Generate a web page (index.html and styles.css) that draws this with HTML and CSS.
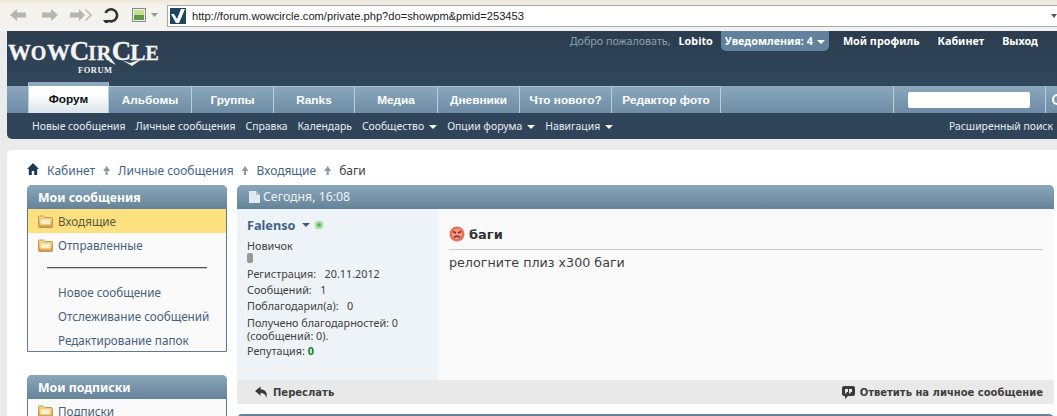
FILE: index.html
```html
<!DOCTYPE html>
<html lang="ru">
<head>
<meta charset="utf-8">
<title>WoWCircle Forum</title>
<link rel="stylesheet" href="styles.css">
</head>
<body>
<div class="browser">
  <div class="nav-icons">
    <svg class="ic i1" width="16" height="14" viewBox="0 0 16 14"><path d="M0 7l7-6v3.500h9v5H7V13z" fill="#b4b6b4"/></svg>
    <svg class="ic i2" width="16" height="14" viewBox="0 0 16 14"><path d="M16 7L9 1v3.500H0v5h9V13z" fill="#b4b6b4"/></svg>
    <svg class="ic i3" width="22" height="14" viewBox="0 0 22 14"><path d="M15 7L9 1v3.500H0v5h9V13zM22 7l-6-6-1 1 5 5-5 5 1 1z" fill="#b4b6b4"/></svg>
    <svg class="ic i4" width="16" height="16" viewBox="0 0 16 16"><path d="M2.500 6A6 6 0 1 1 5 13.500" fill="none" stroke="#333" stroke-width="2.600"/><path d="M0 10h7l-3.500-5z" fill="#333" transform="rotate(180 3.500 11.500)"/></svg>
    <svg class="ic pic" width="14" height="14" viewBox="0 0 14 14"><rect x=".5" y=".5" width="13" height="13" fill="#eee" stroke="#8a8a8a"/><rect x="2" y="2" width="10" height="5" fill="#c8e090"/><rect x="2" y="7" width="10" height="5" fill="#5f9a4a"/></svg>
    <svg class="ic" width="7" height="4" viewBox="0 0 7 4"><path d="M0 0h7L3.500 4z" fill="#999"/></svg>
  </div>
  <div class="url">
    <svg class="fav" width="16" height="16" viewBox="0 0 16 16"><rect width="16" height="16" fill="#1c4560"/><path d="M1 6h3l3 5 4-10h4L9 15H6z" fill="#fff"/></svg>
    <span class="url-text">http://forum.wowcircle.com/private.php?do=showpm&amp;pmid=253453</span>
    <span class="url-arrow"></span>
  </div>
</div>

<header class="header">
  <div class="top">
    <div class="logo">
      <div class="logo-main">W<span class="lg-s">O</span>W<span class="lg-b">C</span><span class="lg-s">IR</span><span class="lg-b">C</span>L<span class="lg-s">E</span></div>
      <div class="logo-sub">FORUM</div>
      <svg class="logo-tail" width="40" height="14" viewBox="0 0 40 14"><path d="M0 0l4 0 8 10-6-3zM18 5l8 3 12-4-10 7z" fill="#f1f1f1"/></svg>
    </div>
    <nav class="usernav">
      <span class="welcome">Добро пожаловать,</span>
      <a class="user">Lobito</a>
      <a class="notif">Уведомления: 4<span class="caret"></span></a>
      <a class="tlink">Мой профиль</a>
      <a class="tlink">Кабинет</a>
      <a class="tlink">Выход</a>
    </nav>
  </div>
  <div class="tabs">
    <a class="tab active">Форум</a>
    <a class="tab tab-83">Альбомы</a>
    <a class="tab tab-82">Группы</a>
    <a class="tab">Ranks</a>
    <a class="tab tab-83">Медиа</a>
    <a class="tab tab-82">Дневники</a>
    <a class="tab tab-w">Что нового?</a>
    <a class="tab tab-r">Редактор фото</a>
    <div class="search">
      <span class="search-input"></span>
    </div>
    <div class="search-btn"><span class="search-c"></span></div>
  </div>
  <div class="subnav">
    <a>Новые сообщения</a>
    <a>Личные сообщения</a>
    <a>Справка</a>
    <a>Календарь</a>
    <a>Сообщество<span class="caret"></span></a>
    <a>Опции форума<span class="caret"></span></a>
    <a>Навигация<span class="caret"></span></a>
    <a class="adv">Расширенный поиск</a>
  </div>
</header>

<main class="page">
  <div class="crumbs">
    <svg class="home" width="12" height="12" viewBox="0 0 12 12"><path d="M6 0L0 6h1.800v6h3V8h2.400v4h3V6H12z" fill="#1d3a54"/></svg>
    <a>Кабинет</a><span class="sep"></span>
    <a>Личные сообщения</a><span class="sep"></span>
    <a>Входящие</a><span class="sep"></span>
    <span class="cur">баги</span>
  </div>
  <div class="columns">
    <aside class="side">
      <section class="box">
        <h2 class="box-h">Мои сообщения</h2>
        <div class="box-b">
          <a class="folder sel"><svg class="fi" width="15" height="13" viewBox="0 0 15 13"><use href="#folder"/></svg>Входящие</a>
          <a class="folder"><svg class="fi" width="15" height="13" viewBox="0 0 15 13"><use href="#folder"/></svg>Отправленные</a>
          <hr class="rule">
          <a class="plain">Новое сообщение</a>
          <a class="plain">Отслеживание сообщений</a>
          <a class="plain">Редактирование папок</a>
        </div>
      </section>
      <section class="box box2">
        <h2 class="box-h">Мои подписки</h2>
        <div class="box-b">
          <a class="folder"><svg class="fi" width="15" height="13" viewBox="0 0 15 13"><use href="#folder"/></svg>Подписки</a>
        </div>
      </section>
    </aside>
    <div class="content">
      <article class="post">
        <div class="post-h">
          <svg class="doc" width="11" height="12" viewBox="0 0 11 12"><path d="M0 0h7l4 4v8H0z" fill="#dfe9f2"/><path d="M7 0l4 4H7z" fill="#a9bfd2"/></svg>
          Сегодня, 16:08
        </div>
        <div class="post-b">
          <div class="author">
            <div class="a-name"><a>Falenso</a><span class="caret dark"></span><span class="online"></span></div>
            <div class="a-rank">Новичок</div>
            <div class="a-pip"></div>
            <div class="a-row">Регистрация: &nbsp; 20.11.2012</div>
            <div class="a-row">Сообщений: &nbsp; 1</div>
            <div class="a-row">Поблагодарил(а): &nbsp; 0</div>
            <div class="a-row a-multi">Получено благодарностей: 0<br>(сообщений: 0).</div>
            <div class="a-row a-rep">Репутация: <b class="rep">0</b></div>
          </div>
          <div class="message">
            <h3 class="m-title">
              <svg class="angry" width="16" height="16" viewBox="0 0 16 16"><circle cx="8" cy="8" r="7.500" fill="#e8705c"/><circle cx="8" cy="8" r="5" fill="#f09a86"/><path d="M4 5.500l3 1.500M12 5.500L9 7M5 11.500q3-2.500 6 0" stroke="#8a2a1c" stroke-width="1.400" fill="none"/></svg>
              баги
            </h3>
            <p class="m-text">релогните плиз х300 баги</p>
          </div>
        </div>
        <div class="post-f">
          <a class="act"><svg class="fwd" width="14" height="13" viewBox="0 0 15 13"><path d="M6 0L0 5l6 5V7c3 0 5 1 6 5 2-5-1-9-6-9z" fill="#3a3a3a"/></svg>Переслать</a>
          <a class="act"><svg width="13" height="13" viewBox="0 0 13 13"><path d="M2 0h9a2 2 0 0 1 2 2v6a2 2 0 0 1-2 2H6l-3 3v-3H2a2 2 0 0 1-2-2V2a2 2 0 0 1 2-2z" fill="#3a3a3a"/><path d="M3 3h3v3H4.500v1.500H3zM7 3h3v3H8.500v1.500H7z" fill="#e9e9e9"/></svg>Ответить на личное сообщение</a>
        </div>
      </article>
      <div class="post-next"></div>
    </div>
  </div>
</main>

<svg class="defs" width="0" height="0" aria-hidden="true">
  <defs>
    <linearGradient id="fg" x1="0" y1="0" x2="0" y2="1"><stop offset="0" stop-color="#f6dd9b"/><stop offset="1" stop-color="#d39a42"/></linearGradient>
    <symbol id="folder" viewBox="0 0 15 13"><path d="M1.500 1h4l1.500 1.500h6.500a1 1 0 0 1 1 1v8a1 1 0 0 1-1 1h-12a1 1 0 0 1-1-1v-9.500a1 1 0 0 1 1-1z" fill="url(#fg)" stroke="#b98a3e" stroke-width=".8"/><rect x="2.500" y="4.500" width="10" height="5" fill="#fbefc4"/></symbol>
  </defs>
</svg>
</body>
</html>
```
FILE: styles.css
```css
* { box-sizing: border-box; }
html, body { margin: 0; padding: 0; height: 416px; overflow: hidden; }
body { background: #ebebeb; font-family: "Noto Sans", sans-serif; font-size: 11px; color: #3e3e3e; }
a { color: inherit; text-decoration: none; }
.defs { position: absolute; }

.browser { height: 31px; display: flex; align-items: center; background: linear-gradient(#ece9d8, #f4f3ee 20%, #f3f2ee); padding: 0 0 1px 10px; }
.nav-icons { display: flex; align-items: center; width: 157px; flex: none; }
.ic { flex: none; }
.i1 { margin-right: 16px; }
.i2 { margin-right: 12px; }
.i3 { margin-right: 11px; }
.i4 { margin-right: 13px; }
.ic.pic { margin-right: 5px; }
.url { flex: 1; height: 22px; margin-top: 1px; background: #fff; border: 1px solid #a7a6aa; border-right: 0; display: flex; align-items: center; padding-left: 2px; }
.fav { flex: none; margin-right: 6px; }
.url-text { font: 11.150px "Liberation Sans", sans-serif; color: #222; white-space: nowrap; }
.url-arrow { margin-left: auto; width: 0; height: 0; border: 3px solid transparent; border-top: 4px solid #555; border-bottom: 0; }

.header { margin-left: 7px; height: 108px; background: linear-gradient(#2b3c4e, #31465a 45%, #2f4459); border-bottom-left-radius: 5px; }
.top { height: 55px; display: flex; justify-content: space-between; }
.logo { position: relative; padding-left: 1px; padding-top: 8px; color: #f3f3f3; width: 170px; line-height: 1; }
.logo-main { font: bold 23px/24px "Liberation Serif", serif; letter-spacing: -.2px; white-space: nowrap; -webkit-text-stroke: .3px #f3f3f3; height: 24px; }
.lg-s { font-size: 20px; letter-spacing: .6px; }
.lg-b { font-size: 27px; letter-spacing: -1px; }
.logo-sub { font: bold 8.500px/10px "Liberation Serif", serif; padding-left: 70px; margin-top: 2px; letter-spacing: .5px; }
.logo-tail { position: absolute; left: 97px; top: 24px; }
.usernav { display: flex; align-items: flex-start; padding-right: 19px; font: bold 10.800px "Noto Sans", sans-serif; color: #fff; height: 20px; }
.usernav > * { line-height: 20px; white-space: nowrap; }
.welcome { font-weight: normal; color: #8fa0b0; margin-right: 8px; font-size: 10.700px; }
.user { margin-right: 8px; }
.notif { background: #60829c; border-radius: 0 0 5px 5px; padding: 0 4px; margin-right: 14px; height: 20px; }
.tlink { margin-right: 18px; }
.tlink:last-child { margin-right: 0; }
.caret { display: inline-block; width: 0; height: 0; border: 4px solid transparent; border-top: 4px solid #fff; border-bottom: 0; margin-left: 4px; vertical-align: 1px; }
.caret.dark { border-top-color: #3e5c76; margin-left: 7px; }

.tabs { height: 27px; display: flex; background: linear-gradient(#8ba8bd, #6d8ca5); position: relative; }
.tab { width: 81px; height: 27px; flex: none; border-top: 1px solid #a9c4d6; border-right: 1px solid #b8cfdd; color: #fff; text-align: center; font: bold 11.800px/27px "Liberation Sans", sans-serif; white-space: nowrap; }
.tab.active { margin-left: 21px; margin-top: -4px; height: 31px; background: linear-gradient(#fff 30%, #dbe5ec); color: #111; border-top: 4px solid #8ba8bd; border-left: 1px solid #b8cfdd; line-height: 26px; }
.tab-83 { width: 83px; }
.tab-82 { width: 82px; }
.tab-w { width: 92px; }
.tab-r { width: 109px; }
.search { margin-left: auto; width: 153px; border-left: 1px solid #b8cfdd; border-right: 1px solid #b8cfdd; display: flex; align-items: center; padding-left: 14px; }
.search-input { width: 122px; height: 16px; background: #fff; border-radius: 2px; }
.search-btn { width: 11px; position: relative; overflow: hidden; }
.search-c { position: absolute; left: 6px; top: 8px; width: 11px; height: 11px; border: 2px solid #fff; border-radius: 50%; }

.subnav { height: 26px; display: flex; align-items: center; padding: 0 0 1px 25px; color: #e8eef3; font-size: 10.400px; white-space: nowrap; }
.subnav a { margin-right: 10px; }
.subnav .caret { vertical-align: 1px; margin-left: 5px; }
.subnav .adv { margin-left: auto; margin-right: 4px; }

.page { margin: 11px 0 0 7px; background: #fff; border-radius: 5px 0 0 0; height: 266px; overflow: hidden; padding: 0 3px 0 20px; }
.crumbs { height: 35px; padding-top: 6px; display: flex; align-items: center; font-size: 12px; color: #3f6583; white-space: nowrap; }
.home { margin-right: 8px; margin-top: -3px; }
.sep { width: 7px; height: 9px; margin: 0 8px; background: #8b9aa5; clip-path: polygon(50% 0, 100% 55%, 65% 55%, 65% 100%, 35% 100%, 35% 55%, 0 55%); }
.cur { color: #3e3e3e; }
.columns { display: flex; gap: 10px; align-items: flex-start; }
.side { width: 200px; flex: none; }
.box { border: 1px solid #5d7a92; border-radius: 5px 5px 0 0; height: 167px; background: #fafafa; }
.box2 { margin-top: 23px; height: 60px; }
.box-h { margin: -1px -1px 0; height: 24px; background: linear-gradient(#8aa6bb, #648399); border-radius: 5px 5px 0 0; color: #fff; font: bold 12.300px/25px "Noto Sans", sans-serif; padding-left: 11px; }
.box-b { display: flex; flex-direction: column; }
.folder { height: 24px; display: flex; align-items: center; padding-left: 10px; font-size: 11.700px; color: #45617b; }
.folder.sel { background: #fde07f; color: #5a5a3f; }
.fi { margin-right: 5px; flex: none; }
.rule { width: 160px; margin: 10px 0 11px 19px; border: 0; border-top: 1px solid #555; border-bottom: 1px solid #ccc; height: 2px; }
.plain { height: 24px; line-height: 24px; padding-left: 30px; font-size: 11.700px; color: #45617b; white-space: nowrap; }

.content { flex: 1; min-width: 0; }
.post-h { height: 24px; background: linear-gradient(#8aa6bb, #648399); color: #eef3f7; font-size: 12.300px; line-height: 24px; border-radius: 5px 5px 0 0; padding-left: 12px; display: flex; align-items: center; gap: 3px; }
.post-b { height: 171px; display: flex; background: #fafafa; }
.author { width: 202px; flex: none; background: #eef3f7; padding: 8px 0 0 10px; font-size: 10.800px; color: #3e3e3e; border-right: 1px solid #f3f6f8; }
.a-name { display: flex; align-items: center; height: 16px; font: bold 12.700px "Noto Sans", sans-serif; color: #3e6484; }
.online { width: 8px; height: 8px; margin-left: 5px; border-radius: 50%; background: #5bb85b; box-shadow: inset 0 0 0 2px #b6ddb0; }
.a-rank { margin-top: 6px; line-height: 13px; }
.a-pip { width: 6px; height: 10px; background: #999; border-radius: 2px; margin-top: 1px; }
.a-row { margin-top: 4px; line-height: 12px; white-space: nowrap; }
.a-pip + .a-row { margin-top: 5px; }
.a-multi { line-height: 13px; }
.a-rep { margin-top: 3px; }
.rep { color: #187b18; }
.message { flex: 1; padding: 17px 11px 0 10px; }
.m-title { margin: 0; height: 24px; font: bold 13px/18px "DejaVu Sans", sans-serif; color: #333; display: flex; align-items: flex-start; gap: 4px; border-bottom: 1px solid #ccc; }
.angry { flex: none; }
.m-text { margin: 5px 0 0; font: 12.700px/16px "DejaVu Sans", sans-serif; color: #3e3e3e; }
.post-f { height: 24px; background: #e9e9e9; display: flex; justify-content: space-between; align-items: center; padding: 0 11px 0 18px; font: bold 10px "DejaVu Sans", sans-serif; color: #3e3e3e; }
.act { display: flex; align-items: center; gap: 5px; }
.fwd { margin-right: -1px; }
.post-next { height: 6px; margin-top: 10px; background: #648399; border-radius: 5px 5px 0 0; }
```
